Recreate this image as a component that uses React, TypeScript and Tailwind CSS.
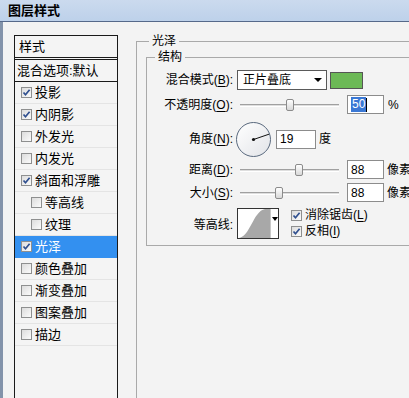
import React from 'react';

const font = "font-['Liberation_Sans','Noto_Sans_CJK_SC',sans-serif]";

function CheckBox({ checked }: { checked?: boolean }) {
  return (
    <span className="flex h-[11px] w-[11px] shrink-0 items-center justify-center border border-[#8e8f8f] bg-gradient-to-br from-[#dcdcdc] to-[#fbfbfb]">
      {checked && (
        <svg width="9" height="9" viewBox="0 0 9 9">
          <path d="M1.5 4.5 L3.5 6.8 L7.6 1.8" fill="none" stroke="#2f4f8f" strokeWidth="1.7" />
        </svg>
      )}
    </span>
  );
}

function Key({ k }: { k: string }) {
  return <span className="underline underline-offset-[2px]">{k}</span>;
}

function Slider({ pos }: { pos: number }) {
  return (
    <div className="relative ml-[3px] h-[12px] w-[99px]">
      <div className="mt-[5px] h-[3px] w-full border-t border-[#a0a0a0] border-b border-b-white bg-[#dedede]" />
      <div
        className="absolute top-0 h-[12px] w-[8px] rounded-[2px] border border-[#8b8b8b] bg-gradient-to-b from-white to-[#d8d8d8]"
        style={{ left: pos }}
      />
    </div>
  );
}

function NumBox({ value, selected, w = 'w-[37px]' }: { value: string; selected?: boolean; w?: string }) {
  return (
    <div className={`flex h-[19px] ${w} items-center border border-[#8c8c8c] bg-white pl-[3px] text-[12px]`}>
      {selected ? (
        <>
          <span className="bg-[#3a78d4] px-[1px] leading-[15px] text-white">{value}</span>
          <span className="h-[14px] w-px bg-black" />
        </>
      ) : (
        <span>{value}</span>
      )}
    </div>
  );
}

const items: { label: string; checked?: boolean; sub?: boolean; active?: boolean }[] = [
  { label: '投影', checked: true },
  { label: '内阴影', checked: true },
  { label: '外发光' },
  { label: '内发光' },
  { label: '斜面和浮雕', checked: true },
  { label: '等高线', sub: true },
  { label: '纹理', sub: true },
  { label: '光泽', checked: true, active: true },
  { label: '颜色叠加' },
  { label: '渐变叠加' },
  { label: '图案叠加' },
  { label: '描边' },
];

export default function App() {
  return (
    <div className={`h-[398px] w-[409px] overflow-hidden bg-[#f3f3f3] text-black ${font}`}>
      {/* title bar */}
      <div className="flex h-[22px] items-center border-b border-[#56698a] bg-gradient-to-b from-[#cbdaee] to-[#bdd1ea] pl-[8px] text-[13px] font-bold">
        图层样式
      </div>

      <div className="flex h-[376px] border-l-[3px] border-[#8393aa]">
        {/* styles list */}
        <div className="pl-[11px] pt-[13px]">
          <div className="h-[400px] w-[104px] border border-[#1a1a1a] bg-[#f4f4f4] text-[12px]">
            <div className="flex h-[22px] items-center border-b border-[#1a1a1a] pl-[4px] text-[13px]">样式</div>
            <div className="mt-[1px] flex h-[23px] items-center border-t border-b border-[#1a1a1a] pl-[2px] text-[13px]">
              混合选项:默认
            </div>
            {items.map((it) => (
              <div
                key={it.label}
                className={`flex h-[22px] items-center gap-[3px] border-b ${
                  it.active ? 'border-[#3390f0] bg-[#3390f0] text-white' : 'border-[#e4e4e4]'
                } ${it.sub ? 'pl-[16px]' : 'pl-[6px]'}`}
              >
                <CheckBox checked={it.checked} />
                <span className="text-[13px]">{it.label}</span>
              </div>
            ))}
          </div>
        </div>

        {/* right panel */}
        <div className="ml-[18px] mt-[12px]">
          <fieldset className="w-[400px] border-l border-t border-[#a9a9a9]">
            <legend className="ml-[12px] px-[3px] text-[12px] leading-[14px]">光泽</legend>
            <div className="pl-[9px]">
              <fieldset className="mt-[2px] w-[400px] border border-[#a9a9a9] pb-[6px]">
                <legend className="ml-[8px] px-[3px] text-[12px] leading-[14px]">结构</legend>
                <div className="flex flex-col pt-[6px] text-[12px]">
                  <div className="flex h-[20px] items-center">
                    <span className="w-[86px] text-right">
                      混合模式(<Key k="B" />):
                    </span>
                    <div className="ml-[4px] flex h-[20px] w-[90px] items-center justify-between border border-[#5a5a5a] bg-white pl-[5px] pr-[4px]">
                      <span>正片叠底</span>
                      <span className="h-0 w-0 border-x-[4px] border-t-[4px] border-x-transparent border-t-black" />
                    </div>
                    <div className="ml-[3px] h-[17px] w-[33px] border border-[#555] bg-[#6cb956]" />
                  </div>

                  <div className="mt-[5px] flex h-[19px] items-center">
                    <span className="w-[86px] text-right">
                      不透明度(<Key k="O" />):
                    </span>
                    <div className="ml-[4px] flex items-center">
                      <Slider pos={46} />
                    </div>
                    <div className="ml-[8px]">
                      <NumBox value="50" selected />
                    </div>
                    <span className="ml-[4px]">%</span>
                  </div>

                  <div className="mt-[7px] flex h-[36px] items-center">
                    <span className="w-[86px] text-right">
                      角度(<Key k="N" />):
                    </span>
                    <div className="ml-[3px] flex h-[35px] w-[35px] items-center justify-center rounded-full border border-[#59697e] bg-gradient-to-br from-white to-[#e2e4e8]">
                      <svg width="33" height="33" viewBox="0 0 33 33">
                        <line x1="16.5" y1="16.5" x2="32" y2="11.2" stroke="#111" strokeWidth="1" />
                        <circle cx="16.5" cy="16.5" r="1.6" fill="#111" />
                      </svg>
                    </div>
                    <div className="ml-[5px]">
                      <NumBox value="19" w="w-[40px]" />
                    </div>
                    <span className="ml-[3px]">度</span>
                  </div>

                  <div className="mt-[3px] flex h-[19px] items-center">
                    <span className="w-[86px] text-right">
                      距离(<Key k="D" />):
                    </span>
                    <div className="ml-[4px] flex items-center">
                      <Slider pos={55} />
                    </div>
                    <div className="ml-[8px]">
                      <NumBox value="88" />
                    </div>
                    <span className="ml-[3px] whitespace-nowrap">像素</span>
                  </div>

                  <div className="mt-[4px] flex h-[19px] items-center">
                    <span className="w-[86px] text-right">
                      大小(<Key k="S" />):
                    </span>
                    <div className="ml-[4px] flex items-center">
                      <Slider pos={35} />
                    </div>
                    <div className="ml-[8px]">
                      <NumBox value="88" />
                    </div>
                    <span className="ml-[3px] whitespace-nowrap">像素</span>
                  </div>

                  <div className="mt-[6px] flex h-[31px] items-start">
                    <span className="mt-[8px] w-[86px] text-right">等高线:</span>
                    <div className="ml-[4px] flex h-[31px] w-[42px] border border-[#333] bg-white">
                      <svg width="32" height="29" viewBox="0 0 32 29" className="shrink-0">
                        <path d="M0 29 C 12 29, 15 2, 27 0 L32 0 L32 29 Z" fill="#a8a8a8" />
                      </svg>
                      <div className="flex flex-1 items-start justify-center border-l border-[#c8c8c8] pt-[8px]">
                        <span className="h-0 w-0 border-x-[3px] border-t-[4px] border-x-transparent border-t-black" />
                      </div>
                    </div>
                    <div className="ml-[12px] flex flex-col gap-[4px] pt-[1px]">
                      <div className="flex h-[12px] items-center gap-[3px]">
                        <CheckBox checked />
                        <span>
                          消除锯齿(<Key k="L" />)
                        </span>
                      </div>
                      <div className="flex h-[12px] items-center gap-[3px]">
                        <CheckBox checked />
                        <span>
                          反相(<Key k="I" />)
                        </span>
                      </div>
                    </div>
                  </div>
                </div>
              </fieldset>
            </div>
            <div className="h-[200px]" />
          </fieldset>
        </div>
      </div>
    </div>
  );
}
